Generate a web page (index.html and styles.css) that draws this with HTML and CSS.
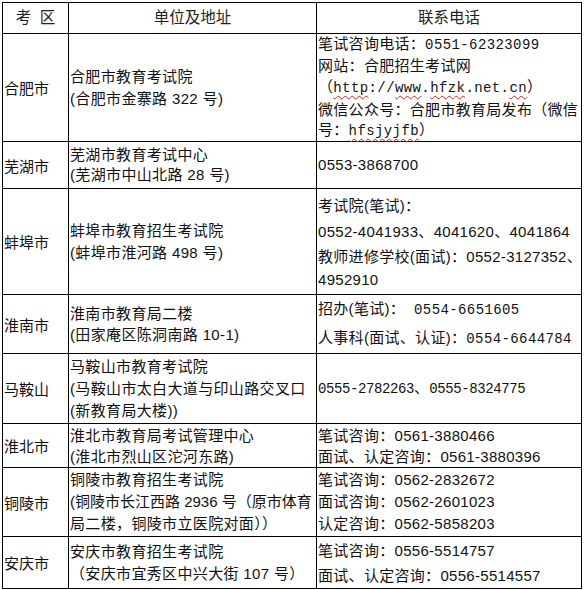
FILE: index.html
```html
<!DOCTYPE html>
<html lang="zh-CN">
<head>
<meta charset="utf-8">
<title>考区联系方式</title>
<link rel="stylesheet" href="styles.css">
</head>
<body>
<div class="sheet">
<table class="exam">
  <colgroup>
    <col class="c-area">
    <col class="c-addr">
    <col class="c-tel">
  </colgroup>
  <thead>
    <tr class="r-head">
      <th>考&nbsp;&nbsp;区</th>
      <th>单位及地址</th>
      <th>联系电话</th>
    </tr>
  </thead>
  <tbody>
    <tr class="r-hefei">
      <td class="area">合肥市</td>
      <td class="addr">
        <div class="ln l22">合肥市教育考试院</div>
        <div class="ln l22">(合肥市金寨路 322 号)</div>
      </td>
      <td class="tel">
        <div class="ln l20">笔试咨询电话：<span class="mono">0551-62323099</span></div>
        <div class="ln l21">网站：合肥招生考试网</div>
        <div class="ln l21">（<span class="mono"><span class="sp">http</span>://<span class="sp">www</span>.<span class="sp">hfzk</span>.net.<span class="sp">cn</span></span>）</div>
        <div class="ln l21">微信公众号：合肥市教育局发布（微信</div>
        <div class="ln l20">号：<span class="mono sp">hfsjyjfb</span>）</div>
      </td>
    </tr>
    <tr class="r-wuhu">
      <td class="area">芜湖市</td>
      <td class="addr">
        <div class="ln l20">芜湖市教育考试中心</div>
        <div class="ln l20">(芜湖市中山北路 28 号)</div>
      </td>
      <td class="tel">
        <div class="ln l20">0553-3868700</div>
      </td>
    </tr>
    <tr class="r-bengbu">
      <td class="area">蚌埠市</td>
      <td class="addr">
        <div class="ln l22">蚌埠市教育招生考试院</div>
        <div class="ln l22">(蚌埠市淮河路 498 号)</div>
      </td>
      <td class="tel">
        <div class="ln l27">考试院(笔试)：</div>
        <div class="ln l26">0552-4041933、4041620、4041864</div>
        <div class="ln l23">教师进修学校(面试)：0552-3127352、</div>
        <div class="ln l23">4952910</div>
      </td>
    </tr>
    <tr class="r-huainan">
      <td class="area">淮南市</td>
      <td class="addr">
        <div class="ln l21">淮南市教育局二楼</div>
        <div class="ln l21">(田家庵区陈洞南路 10-1)</div>
      </td>
      <td class="tel">
        <div class="ln l27">招办(笔试)：&nbsp;&nbsp;<span class="mono">0554-6651605</span></div>
        <div class="ln l27">人事科(面试、认证)：<span class="mono">0554-6644784</span></div>
      </td>
    </tr>
    <tr class="r-maanshan">
      <td class="area">马鞍山</td>
      <td class="addr">
        <div class="ln l22">马鞍山市教育考试院</div>
        <div class="ln l22">(马鞍山市太白大道与印山路交叉口</div>
        <div class="ln l22">(新教育局大楼))</div>
      </td>
      <td class="tel">
        <div class="ln l22"><span class="mono narrow">0555-2782263</span>、<span class="mono narrow">0555-8324775</span></div>
      </td>
    </tr>
    <tr class="r-huaibei">
      <td class="area">淮北市</td>
      <td class="addr">
        <div class="ln l21">淮北市教育局考试管理中心</div>
        <div class="ln l21">(淮北市烈山区沱河东路)</div>
      </td>
      <td class="tel">
        <div class="ln l21">笔试咨询：0561-3880466</div>
        <div class="ln l21">面试、认定咨询：0561-3880396</div>
      </td>
    </tr>
    <tr class="r-tongling">
      <td class="area">铜陵市</td>
      <td class="addr">
        <div class="ln l22">铜陵市教育招生考试院</div>
        <div class="ln l22 tight">(铜陵市长江西路 2936 号（原市体育</div>
        <div class="ln l22">局二楼，铜陵市立医院对面））</div>
      </td>
      <td class="tel">
        <div class="ln l22">笔试咨询：0562-2832672</div>
        <div class="ln l22">面试咨询：0562-2601023</div>
        <div class="ln l22">认定咨询：0562-5858203</div>
      </td>
    </tr>
    <tr class="r-anqing">
      <td class="area">安庆市</td>
      <td class="addr">
        <div class="ln l22">安庆市教育招生考试院</div>
        <div class="ln l22">（安庆市宜秀区中兴大街 107 号）</div>
      </td>
      <td class="tel">
        <div class="ln l25">笔试咨询：0556-5514757</div>
        <div class="ln l25">面试、认定咨询：0556-5514557</div>
      </td>
    </tr>
  </tbody>
</table>
</div>
</body>
</html>
```

FILE: styles.css
```css
html, body {
  margin: 0;
  padding: 0;
  background: #ffffff;
}

.sheet {
  padding: 2px 0 0 2px;
}

.exam {
  border-collapse: collapse;
  table-layout: fixed;
  width: 579px;
  font-family: "Liberation Sans", "Noto Sans CJK SC", sans-serif;
  font-size: 15px;
  color: #111111;
}

.c-area { width: 66px; }
.c-addr { width: 248px; }
.c-tel { width: 265px; }

.exam th,
.exam td {
  border: 1px solid #000000;
  padding: 0 1px;
  vertical-align: middle;
  text-align: left;
  overflow: visible;
}

.exam th {
  font-weight: normal;
  text-align: center;
  font-size: 15.5px;
  color: #222222;
  line-height: 20px;
}

.r-head { height: 31px; }
.r-hefei { height: 107px; }
.r-wuhu { height: 47px; }
.r-bengbu { height: 106px; }
.r-huainan { height: 58px; }
.r-maanshan { height: 70px; }
.r-huaibei { height: 44px; }
.r-tongling { height: 69px; }
.r-anqing { height: 52px; }

.area {
  white-space: nowrap;
}

.addr {
  letter-spacing: 0.35px;
}

.tel {
  letter-spacing: 0.3px;
}

.ln {
  white-space: nowrap;
}

.ln.tight {
  letter-spacing: 0;
}

.l20 { line-height: 20px; }
.l21 { line-height: 21px; }
.l22 { line-height: 22px; }
.l23 { line-height: 23px; }
.l25 { line-height: 25px; }
.l26 { line-height: 26px; }
.l27 { line-height: 27px; }

.mono {
  font-family: "Liberation Mono", "Noto Sans CJK SC", monospace;
  font-size: 14px;
  letter-spacing: 0.4px;
}

.mono.narrow {
  font-size: 14px;
  letter-spacing: -0.4px;
}

.sp {
  text-decoration: underline wavy #d22222;
  text-decoration-thickness: 1px;
  text-underline-offset: 3px;
}
```
